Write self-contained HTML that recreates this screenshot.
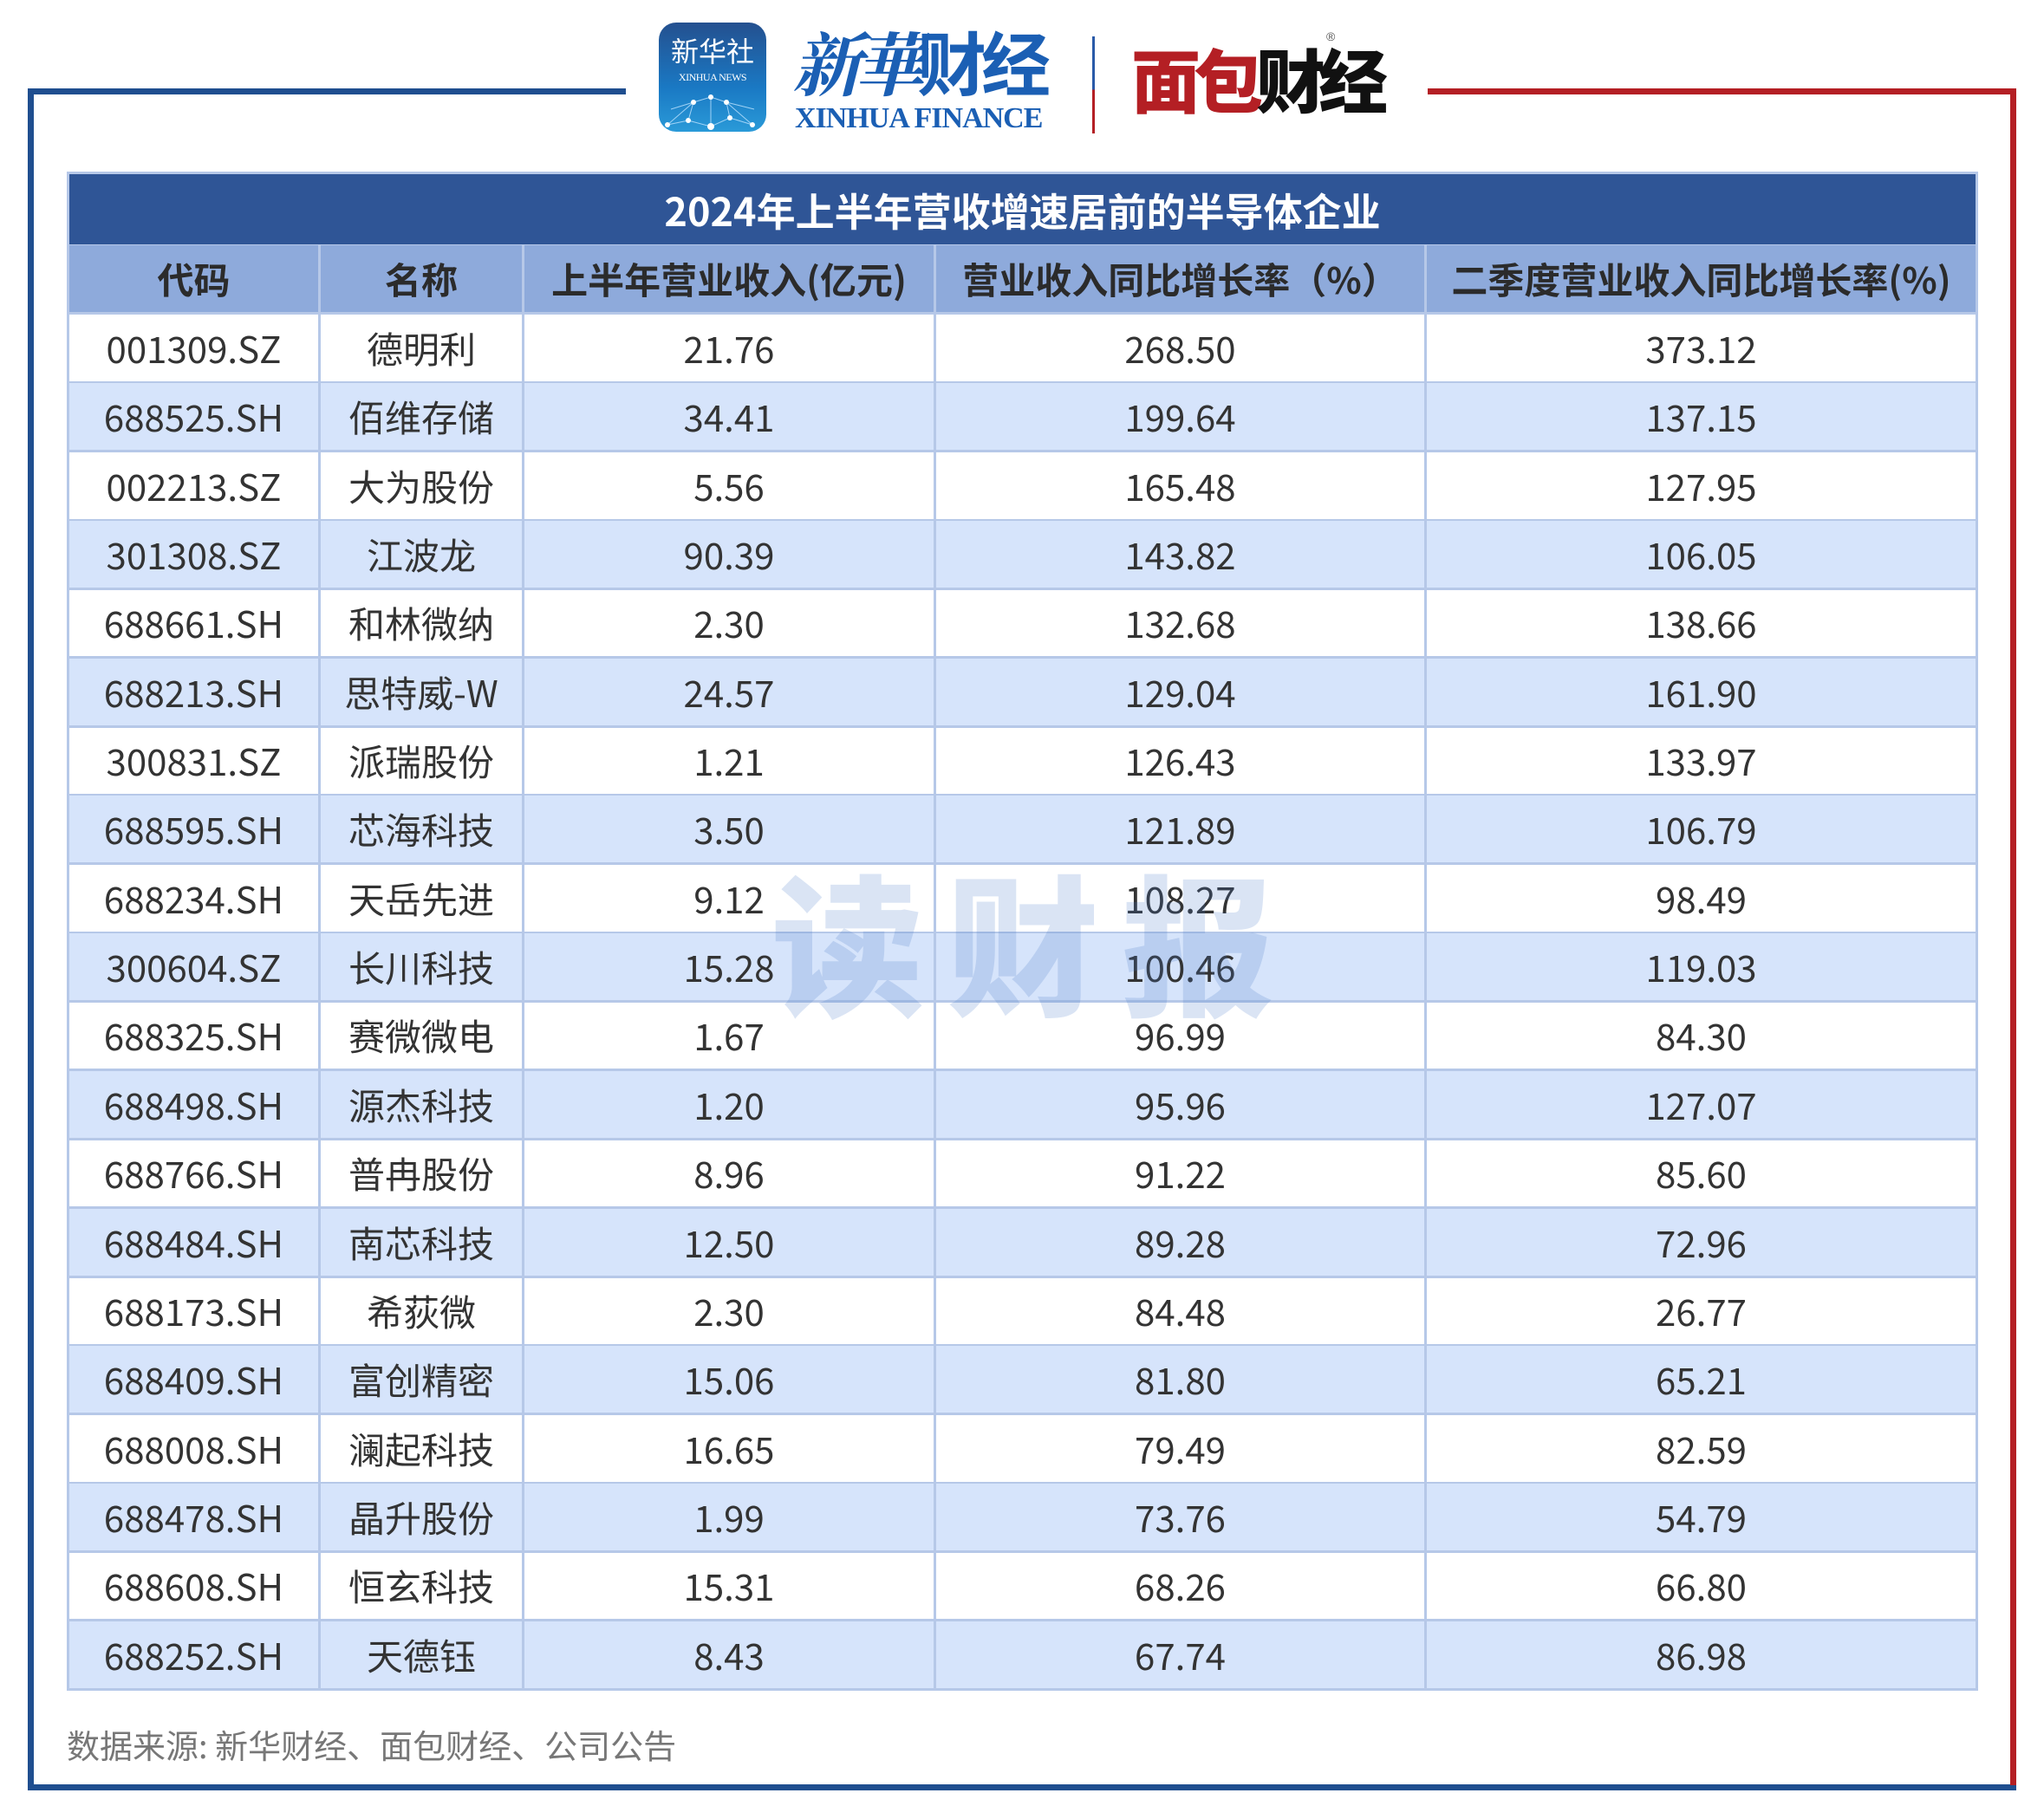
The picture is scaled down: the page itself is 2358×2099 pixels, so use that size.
<!DOCTYPE html>
<html><head><meta charset="utf-8">
<style>
*{margin:0;padding:0;box-sizing:border-box}
body{width:2358px;height:2099px;background:#fff;position:relative;overflow:hidden;font-family:"Liberation Sans","Noto Sans CJK SC",sans-serif}
.a{position:absolute}
.row{position:absolute;left:77px;width:2205px;height:80px;display:flex;border-bottom:3px solid #b6c8e8}
.row div{height:100%;display:flex;align-items:center;justify-content:center;border-right:3px solid #b6c8e8;font-size:42px;color:#333;font-family:"Noto Sans CJK SC",sans-serif}
.row div:first-child{border-left:3px solid #b6c8e8}
.c1{width:293px}.c2{width:235px}.c3{width:475px}.c4{width:566px}.c5{width:636px}
.alt{background:#d6e4fb}
.hdr div{font-weight:bold;color:#2b2b2b}
</style></head><body>
<div class="a" style="left:32px;top:102px;width:690px;height:7px;background:#1f4e8f"></div>
<div class="a" style="left:32px;top:102px;width:7px;height:1964px;background:#1f4e8f"></div>
<div class="a" style="left:32px;top:2059px;width:2294px;height:7px;background:#1f4e8f"></div>
<div class="a" style="left:1647px;top:102px;width:679px;height:7px;background:#b41f24"></div>
<div class="a" style="left:2319px;top:102px;width:7px;height:1958px;background:#b41f24"></div>

<div class="a" style="left:760px;top:26px;width:124px;height:126px;border-radius:20px;background:linear-gradient(#24508f,#1a79c4 60%,#2a9ad8);overflow:hidden">
 <div class="a" style="left:0;top:14px;width:124px;text-align:center;color:#fff;font-size:32px;font-family:'Noto Sans CJK SC',sans-serif;line-height:36px">新华社</div>
 <div class="a" style="left:0;top:56px;width:124px;text-align:center;color:#fff;font-size:12px;font-family:'Liberation Serif',serif;letter-spacing:-0.5px">XINHUA NEWS</div>
 <svg class="a" style="left:0;top:78px" width="124" height="48" viewBox="0 0 124 48"><g stroke="#bfe3ff" stroke-width="1" fill="none" opacity=".8"><path d="M10 40 L40 14 L60 8 L78 14 L108 40 M40 14 L34 35 L60 42 L82 32 L78 14 M60 8 L60 42 M14 22 L40 14 M110 22 L78 14 M34 35 L10 40 M82 32 L108 40"/></g><g fill="#fff"><circle cx="40" cy="14" r="3"/><circle cx="60" cy="8" r="3"/><circle cx="78" cy="14" r="3"/><circle cx="34" cy="35" r="3"/><circle cx="60" cy="42" r="4"/><circle cx="82" cy="32" r="3"/><circle cx="10" cy="40" r="3"/><circle cx="108" cy="40" r="3"/></g></svg>
</div>
<div class="a" style="left:914px;top:20px;font-size:80px;line-height:100px;color:#1b5fb4;font-family:'Noto Serif CJK SC',serif;font-weight:bold;font-style:italic;letter-spacing:-8px">新華<span style="font-style:normal;font-family:'Noto Sans CJK SC',sans-serif;letter-spacing:-6px">财经</span></div>
<div class="a" style="left:917px;top:118px;font-size:34px;color:#1b5fb4;font-family:'Liberation Serif',serif;font-weight:bold;letter-spacing:-1px">XINHUA FINANCE</div>
<div class="a" style="left:1260px;top:42px;width:3px;height:112px;background:linear-gradient(#2a5aa8 55%,#b41f24 55%)"></div>
<div class="a" style="left:1305px;top:40px;font-size:80px;line-height:100px;font-weight:900;font-family:'Noto Sans CJK SC',sans-serif;letter-spacing:-8px"><span style="color:#b41f24">面包</span><span style="color:#111">财经</span></div>
<div class="a" style="left:1530px;top:34px;font-size:14px;color:#555">®</div>

<div class="a" style="left:77px;top:198px;width:2205px;height:87px;background:#2f5596;border:3px solid #b6c8e8;color:#fff;font-size:45px;font-weight:bold;display:flex;align-items:center;justify-content:center;font-family:'Noto Sans CJK SC',sans-serif">2024年上半年营收增速居前的半导体企业</div>

<div class="row hdr" style="top:283px;background:#8eaadb"><div class="c1">代码</div><div class="c2">名称</div><div class="c3">上半年营业收入(亿元)</div><div class="c4">营业收入同比增长率（%）</div><div class="c5">二季度营业收入同比增长率(%)</div></div>

<div class="row" style="top:363px"><div class="c1">001309.SZ</div><div class="c2">德明利</div><div class="c3">21.76</div><div class="c4">268.50</div><div class="c5">373.12</div></div>
<div class="row alt" style="top:442px"><div class="c1">688525.SH</div><div class="c2">佰维存储</div><div class="c3">34.41</div><div class="c4">199.64</div><div class="c5">137.15</div></div>
<div class="row" style="top:522px"><div class="c1">002213.SZ</div><div class="c2">大为股份</div><div class="c3">5.56</div><div class="c4">165.48</div><div class="c5">127.95</div></div>
<div class="row alt" style="top:601px"><div class="c1">301308.SZ</div><div class="c2">江波龙</div><div class="c3">90.39</div><div class="c4">143.82</div><div class="c5">106.05</div></div>
<div class="row" style="top:680px"><div class="c1">688661.SH</div><div class="c2">和林微纳</div><div class="c3">2.30</div><div class="c4">132.68</div><div class="c5">138.66</div></div>
<div class="row alt" style="top:760px"><div class="c1">688213.SH</div><div class="c2">思特威-W</div><div class="c3">24.57</div><div class="c4">129.04</div><div class="c5">161.90</div></div>
<div class="row" style="top:839px"><div class="c1">300831.SZ</div><div class="c2">派瑞股份</div><div class="c3">1.21</div><div class="c4">126.43</div><div class="c5">133.97</div></div>
<div class="row alt" style="top:918px"><div class="c1">688595.SH</div><div class="c2">芯海科技</div><div class="c3">3.50</div><div class="c4">121.89</div><div class="c5">106.79</div></div>
<div class="row" style="top:998px"><div class="c1">688234.SH</div><div class="c2">天岳先进</div><div class="c3">9.12</div><div class="c4">108.27</div><div class="c5">98.49</div></div>
<div class="row alt" style="top:1077px"><div class="c1">300604.SZ</div><div class="c2">长川科技</div><div class="c3">15.28</div><div class="c4">100.46</div><div class="c5">119.03</div></div>
<div class="row" style="top:1156px"><div class="c1">688325.SH</div><div class="c2">赛微微电</div><div class="c3">1.67</div><div class="c4">96.99</div><div class="c5">84.30</div></div>
<div class="row alt" style="top:1236px"><div class="c1">688498.SH</div><div class="c2">源杰科技</div><div class="c3">1.20</div><div class="c4">95.96</div><div class="c5">127.07</div></div>
<div class="row" style="top:1315px"><div class="c1">688766.SH</div><div class="c2">普冉股份</div><div class="c3">8.96</div><div class="c4">91.22</div><div class="c5">85.60</div></div>
<div class="row alt" style="top:1395px"><div class="c1">688484.SH</div><div class="c2">南芯科技</div><div class="c3">12.50</div><div class="c4">89.28</div><div class="c5">72.96</div></div>
<div class="row" style="top:1474px"><div class="c1">688173.SH</div><div class="c2">希荻微</div><div class="c3">2.30</div><div class="c4">84.48</div><div class="c5">26.77</div></div>
<div class="row alt" style="top:1553px"><div class="c1">688409.SH</div><div class="c2">富创精密</div><div class="c3">15.06</div><div class="c4">81.80</div><div class="c5">65.21</div></div>
<div class="row" style="top:1633px"><div class="c1">688008.SH</div><div class="c2">澜起科技</div><div class="c3">16.65</div><div class="c4">79.49</div><div class="c5">82.59</div></div>
<div class="row alt" style="top:1712px"><div class="c1">688478.SH</div><div class="c2">晶升股份</div><div class="c3">1.99</div><div class="c4">73.76</div><div class="c5">54.79</div></div>
<div class="row" style="top:1791px"><div class="c1">688608.SH</div><div class="c2">恒玄科技</div><div class="c3">15.31</div><div class="c4">68.26</div><div class="c5">66.80</div></div>
<div class="row alt" style="top:1871px"><div class="c1">688252.SH</div><div class="c2">天德钰</div><div class="c3">8.43</div><div class="c4">67.74</div><div class="c5">86.98</div></div>

<div class="a" style="left:890px;top:978px;font-size:176px;line-height:210px;font-weight:900;color:rgba(70,120,200,0.2);letter-spacing:26px;font-family:'Noto Sans CJK SC',sans-serif">读财报</div>

<div class="a" style="left:77px;top:1990px;font-size:38px;color:#777;font-family:'Noto Sans CJK SC',sans-serif;line-height:46px">数据来源: 新华财经、面包财经、公司公告</div>
</body></html>
